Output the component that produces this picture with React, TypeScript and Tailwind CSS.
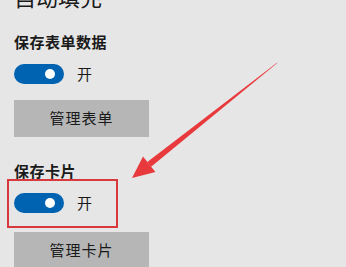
export default function App() {
  return (
    <div
      className="relative w-[346px] h-[267px] overflow-hidden bg-[#e6e6e6] text-[#1a1a1a]"
      style={{ fontFamily: '"Noto Sans CJK SC", "Noto Sans", sans-serif' }}
    >
      <div className="flex flex-col pl-[14px]">
        {/* 标题 */}
        <div className="mt-[-15px] h-[22px] text-[22px] leading-[22px]">自动填充</div>

        {/* 保存表单数据 */}
        <div className="mt-[25px] h-[20px] text-[15px] leading-[20px] font-bold tracking-[0.5px]">保存表单数据</div>
        <div className="mt-[12px] flex items-center gap-[13px]">
          <Toggle />
          <span className="text-[15px] leading-[20px]">开</span>
        </div>
        <button className="mt-[16px] w-[135px] h-[37px] bg-[#b6b6b6] text-[15px] tracking-[1px]">管理表单</button>

        {/* 保存卡片 */}
        <div className="mt-[24px] h-[20px] text-[15px] leading-[20px] font-bold tracking-[0.5px]">保存卡片</div>
        <div className="relative mt-[12px] flex items-center gap-[13px]">
          <Toggle />
          <span className="text-[15px] leading-[20px]">开</span>
          <div className="absolute left-[-7px] top-[-14px] w-[111px] h-[49px] border-2 border-[#d8393c]" />
        </div>
        <button className="mt-[19px] w-[135px] h-[37px] bg-[#b6b6b6] text-[15px] tracking-[1px]">管理卡片</button>
      </div>

      {/* 红色箭头 */}
      <svg className="absolute left-0 top-0" width="346" height="267" viewBox="0 0 346 267">
        <polygon
          points="277.3,62.6 276.7,63.4 151.1,166.7 147.3,161.9"
          fill="#e8393d"
        />
        <polygon points="132,178 143,156.5 155.4,172.1" fill="#e8393d" />
      </svg>
    </div>
  );
}

function Toggle() {
  return (
    <div className="w-[50px] h-[20px] rounded-full bg-[#0063b1] flex items-center justify-end pr-[9px]">
      <div className="w-[10px] h-[10px] rounded-full bg-white" />
    </div>
  );
}
